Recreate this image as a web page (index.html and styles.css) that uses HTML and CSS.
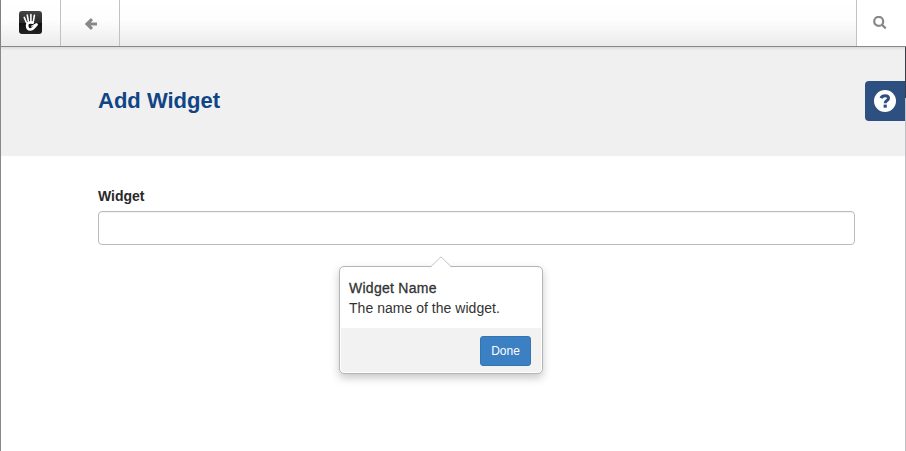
FILE: index.html
```html
<!DOCTYPE html>
<html lang="en">
<head>
<meta charset="utf-8">
<title>Add Widget</title>
<link rel="stylesheet" href="styles.css">
</head>
<body>
<div class="window">
  <nav class="toolbar">
    <a class="tool logo-cell"><svg class="logo" viewBox="0 0 23 23">
      <defs><linearGradient id="tile" x2="0" y2="1"><stop stop-color="#444"/><stop offset=".5" stop-color="#292929"/><stop offset=".54" stop-color="#101010"/><stop offset="1" stop-color="#222"/></linearGradient></defs>
      <rect width="23" height="23" rx="3" fill="url(#tile)"/>
      <g fill="none" stroke="#fff" stroke-linecap="round">
        <path stroke-width="1.6" d="M5.2 6.4 7.3 11.3M8.3 4.1 9.3 10M11.9 3.5V10M15.4 4.4 14.4 10.2"/>
        <path stroke-width="2.7" d="M13.8 11.6C10.3 11 8 11.7 8.1 14.4C8.2 17.5 9.4 18.7 11.4 18.5C14.8 18.2 15.6 15.4 17.6 13.6"/>
        <path stroke-width="1.3" d="M17.7 13.1C15.7 12.8 14.8 14.8 12.8 15.2"/>
      </g>
    </svg></a>
    <a class="tool back-cell"><svg class="arrow" viewBox="0 0 12 12"><path d="M7 1.2 2 6 7 10.8M2.4 6H12"/></svg></a>
    <span class="toolbar-space"></span>
    <a class="tool search-cell"><svg class="search" viewBox="0 0 14 14"><circle cx="5.7" cy="5.4" r="4.5"/><path d="M9 8.7 12.7 12.4"/></svg></a>
  </nav>
  <header class="heading">
    <h1>Add Widget</h1>
    <a class="help"><svg viewBox="0 0 22 22"><circle cx="11" cy="11" r="11" fill="#fff"/><path class="question" d="M6.9 8.2C7.8 6.4 9.1 5.7 11 5.7C13.3 5.7 14.5 6.9 14.5 8.3C14.5 10.8 11.2 10.4 11.2 13.2"/><path class="dot" d="M9.6 14.6h3.2v3.1H9.6z"/></svg></a>
  </header>
  <main class="content">
    <label for="widget">Widget</label>
    <input id="widget" type="text">
    <section class="popover">
      <svg class="pointer" viewBox="0 0 22 12"><path d="M0 12 11 1 22 12Z" fill="#fff"/><path d="M.5 11 11 .8 21.5 11" fill="none" stroke="#c4c4c4"/></svg>
      <div class="message"><h2>Widget Name</h2><p>The name of the widget.</p></div>
      <footer><button type="button">Done</button></footer>
    </section>
  </main>
</div>
</body>
</html>
```
FILE: styles.css
```css
* { box-sizing: border-box; }
body {
  margin: 0;
  background: #fff;
  color: #333;
  font: 14px/20px "Liberation Sans", Arial, sans-serif;
}
.window {
  position: relative;
  height: 451px;
  border-left: 1px solid #888;
  border-right: 1px solid #c0c0c4;
}
/* Darker top part of the window's right edge */
.window::after {
  content: "";
  position: absolute;
  top: 47px;
  right: -1px;
  width: 1px;
  height: 51px;
  background: #363d47;
}
.toolbar {
  position: relative;
  z-index: 1;
  display: flex;
  height: 47px;
  margin-right: -1px;
  border-bottom: 1px solid #888;
  background: linear-gradient(#fff 0%, #fdfdfd 45%, #ebebeb 100%);
  box-shadow: 0 1px 3px rgba(0, 0, 0, .13);
}
.tool {
  display: flex;
  align-items: center;
  justify-content: center;
}
.logo-cell { width: 60px; border-right: 1px solid #c2c2c2; }
.back-cell { width: 59px; border-right: 1px solid #c2c2c2; }
.toolbar-space { flex: 1; }
.search-cell { width: 50px; border-left: 1px solid #c2c2c2; background: #fff; padding-right: 3px; }
.logo { width: 23px; height: 23px; margin-top: -1px; }
.arrow { width: 12px; height: 12px; margin-left: 2px; margin-top: 1px; }
.arrow path { fill: none; stroke: #888; stroke-width: 3; }
.search { width: 14px; height: 14px; fill: none; stroke: #888; stroke-width: 2.2; }
.heading {
  display: flex;
  justify-content: space-between;
  align-items: flex-start;
  height: 109px;
  padding: 34px 0 0 97px;
  background: #f0f0f0;
}
h1 {
  margin: 5px 0 0;
  color: #104585;
  font-size: 22px;
  line-height: 30px;
}
.help {
  display: flex;
  justify-content: center;
  align-items: center;
  width: 40px;
  height: 40px;
  border-radius: 4px 0 0 4px;
  background: #2d5080;
}
.help svg { width: 22px; height: 22px; }
.question { fill: none; stroke: #2d5080; stroke-width: 3; }
.dot { fill: #2d5080; }
.content { padding: 30px 50px 0 97px; }
label { display: block; margin-bottom: 5px; color: #292929; font-weight: bold; }
input {
  display: block;
  width: 757px;
  height: 34px;
  border: 1px solid #bbb;
  border-radius: 4px;
  background: #fff;
  box-shadow: inset 0 1px 1px rgba(0, 0, 0, .05);
}
.popover {
  position: relative;
  width: 204px;
  height: 108px;
  margin: 21px 0 0 241px;
  padding: 1px;
  border: 1px solid #b5b5b5;
  border-radius: 5px;
  background: #fff;
  box-shadow: 0 4px 9px rgba(0, 0, 0, .22);
}
.pointer { position: absolute; top: -11px; left: 90px; width: 22px; height: 12px; }
.message { height: 60px; padding: 10px 8px 0; }
h2, p { margin: 0; font-size: 14px; line-height: 20px; font-weight: normal; }
h2 { letter-spacing: .27px; -webkit-text-stroke: .3px #333; }
p { letter-spacing: .03px; }
footer {
  display: flex;
  justify-content: flex-end;
  align-items: flex-start;
  height: 44px;
  padding: 8px 10px;
  border-radius: 0 0 3px 3px;
  background: #f2f2f2;
}
button {
  width: 51px;
  height: 30px;
  padding: 0;
  border: 1px solid #3276b1;
  border-radius: 3px;
  background: #3b80c3;
  color: #fff;
  font: 12px/18px "Liberation Sans", Arial, sans-serif;
}
```
